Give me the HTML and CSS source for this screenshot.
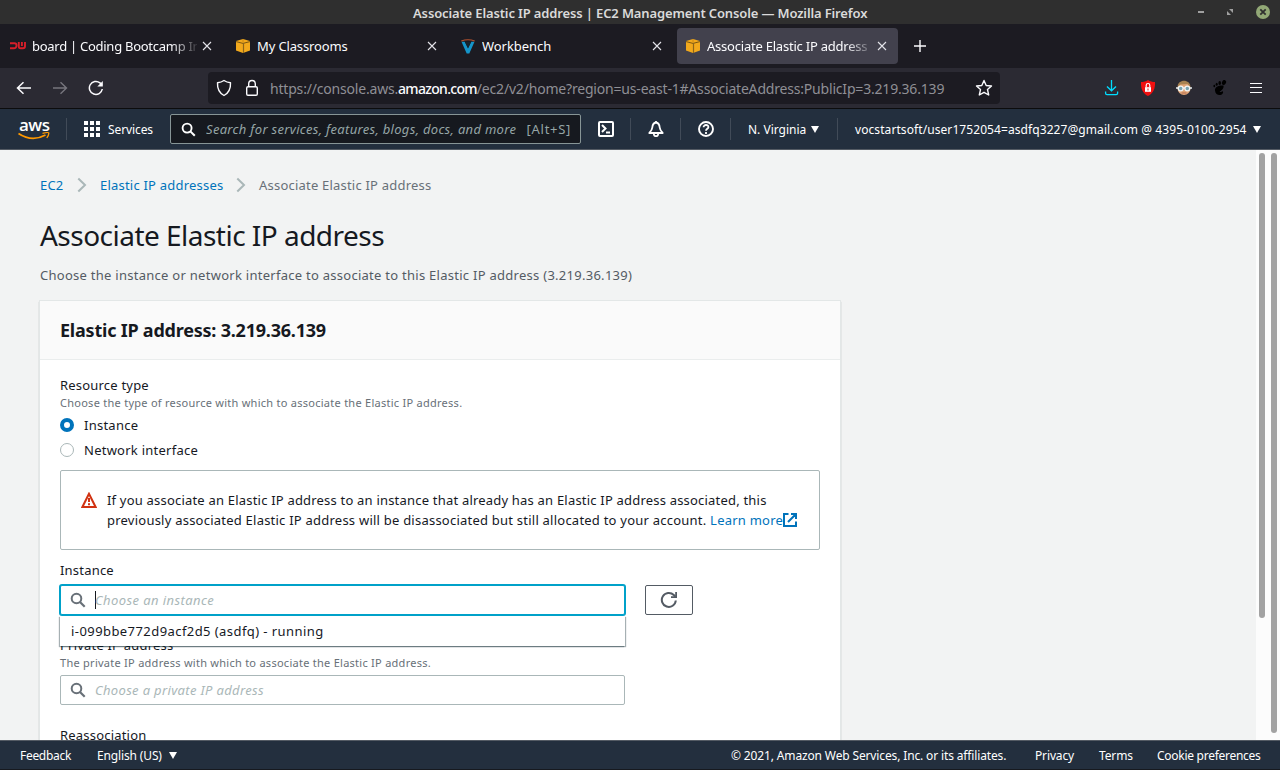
FILE: index.html
```html
<!DOCTYPE html>
<html lang="en">
<head>
<meta charset="utf-8">
<title>Associate Elastic IP address | EC2 Management Console</title>
<link rel="stylesheet" href="styles.css">
</head>
<body>
<svg class="defs" width="0" height="0">
  <symbol id="x" viewBox="0 0 10 10"><path d="M1 1l8 8M9 1l-8 8" stroke="#e4e4ea" stroke-width="1.1" fill="none"/></symbol>
  <symbol id="cube" viewBox="0 0 14 14"><path d="M0 2L7 0l7 2v9.5L7 14l-7-2.500z" fill="#f2a91c"/><path d="M0 2.600L7 4.400l7-1.800" stroke="#5d4310" stroke-width=".8" fill="none"/><path d="M7.500 4v10" stroke="#8d651a" stroke-width="1.200"/><path d="M7 .2v3" stroke="#b57a16" stroke-width=".6"/></symbol>
  <symbol id="search" viewBox="0 0 16 16"><circle cx="6.500" cy="6.500" r="4.800" stroke="currentColor" stroke-width="2" fill="none"/><path d="M10 10l4.700 4.700" stroke="currentColor" stroke-width="2.200"/></symbol>
  <symbol id="chev" viewBox="0 0 10 16"><path d="M1.300 1.500L8 8l-6.700 6.500" stroke="#aab7b8" stroke-width="2" fill="none"/></symbol>
  <symbol id="tri" viewBox="0 0 8 7"><path d="M0 0h8L4 7z" fill="#fff"/></symbol>
</svg>

<div class="titlebar">
  <span class="window-title">Associate Elastic IP address | EC2 Management Console — Mozilla Firefox</span>
  <div class="window-controls">
    <svg width="6" height="2"><path d="M0 0h6v2H0z" fill="#a0a0a0"/></svg>
    <svg width="6" height="6"><path d="M2 0h4v4zM0 2l4 4H0z" fill="#a0a0a0"/></svg>
    <svg width="14" height="14"><circle cx="7" cy="7" r="7" fill="#92a876"/><path d="M4.300 4.300l5.400 5.400M9.700 4.300L4.300 9.700" stroke="#2f2f2f" stroke-width="1.800"/></svg>
  </div>
</div>

<div class="tabs">
  <div class="tab">
    <svg class="fav" width="16" height="8" viewBox="0 0 16 8"><path d="M0 1.200h4.500a2 2 0 0 1 2 2v.6a2.500 2.500 0 0 1-2.500 2.500H0M8.800 0v4.500a1.800 1.800 0 0 0 1.800 1.800H13a2 2 0 0 0 2-2V0M11.900 0v4" stroke="#d81f2a" stroke-width="1.900" fill="none"/></svg>
    <span class="tab-text t-board">board | Coding Bootcamp In</span>
    <svg class="close" width="10" height="10"><use href="#x"/></svg>
  </div>
  <div class="tab">
    <svg class="fav" width="14" height="14"><use href="#cube"/></svg>
    <span class="tab-text t-class">My Classrooms</span>
    <svg class="close" width="10" height="10"><use href="#x"/></svg>
  </div>
  <div class="tab">
    <svg class="fav" width="14" height="15" viewBox="0 0 14 15"><path d="M.5 2.800h3.200L7 9.500l3.300-6.700h3.200L8.300 14.500H5.700z" fill="#1595c9"/><path d="M4 3h6L7 9z" fill="#17252e"/><path d="M.3 2Q7-.6 13.700 2" stroke="#b5532f" stroke-width="1.100" fill="none"/></svg>
    <span class="tab-text t-work">Workbench</span>
    <svg class="close" width="10" height="10"><use href="#x"/></svg>
  </div>
  <div class="tab active">
    <svg class="fav" width="14" height="14"><use href="#cube"/></svg>
    <span class="tab-text t-assoc">Associate Elastic IP address</span>
    <svg class="close" width="10" height="10"><use href="#x"/></svg>
  </div>
  <svg class="plus" width="12" height="12"><path d="M6 0v12M0 6h12" stroke="#fbfbfe" stroke-width="1.400"/></svg>
</div>

<div class="navbar">
  <div class="nav-buttons">
    <svg width="16" height="14" viewBox="0 0 16 14"><path d="M15 7H2M7.500 1.300L1.500 7l6 5.700" stroke="#fbfbfe" stroke-width="1.500" fill="none"/></svg>
    <svg width="16" height="14" viewBox="0 0 16 14"><path d="M1 7h13M8.500 1.300l6 5.700-6 5.700" stroke="#77767e" stroke-width="1.400" fill="none"/></svg>
    <svg width="16" height="16" viewBox="0 0 16 16"><path d="M14.300 9A6.500 6.500 0 1 1 12 2.900l2 2" stroke="#fbfbfe" stroke-width="1.500" fill="none"/><path d="M14.800 1v5.500H9.300z" fill="#fbfbfe"/></svg>
  </div>
  <div class="urlbar">
    <svg width="16" height="18" viewBox="0 0 16 18"><path d="M8 1.500c2 1.400 4 2 6.500 2.200C14.800 9.500 12.500 14 8 16.500 3.500 14 1.200 9.500 1.500 3.700 4 3.500 6 2.900 8 1.500z" stroke="#fbfbfe" stroke-width="1.400" fill="none" stroke-linejoin="round"/></svg>
    <svg class="lock" width="14" height="18" viewBox="0 0 14 18"><rect x="1.700" y="7.700" width="10.600" height="8.600" rx="1.300" stroke="#fbfbfe" stroke-width="1.400" fill="none"/><path d="M3.700 7.500V4.800a3.300 3.300 0 0 1 6.600 0v2.700" stroke="#fbfbfe" stroke-width="1.400" fill="none"/></svg>
    <span class="url">https://console.aws.<b>amazon.com</b>/ec2/v2/home?region=us-east-1#AssociateAddress:PublicIp=3.219.36.139</span>
    <svg class="star" width="18" height="18" viewBox="0 0 18 18"><path d="M9 1.500l2.200 5 5.300.5-4 3.600 1.200 5.400L9 13.300 4.300 16l1.200-5.400-4-3.600 5.300-.5z" stroke="#fbfbfe" stroke-width="1.400" fill="none" stroke-linejoin="round"/></svg>
  </div>
  <div class="extensions">
    <svg width="16" height="16" viewBox="0 0 16 16"><path d="M7.500 0v10.500M3 6.500l4.500 4.300L12 6.500M1.600 11.500v1.800q0 1.400 1.400 1.400h9.200q1.400 0 1.400-1.400v-1.800" stroke="#00ddff" stroke-width="1.300" fill="none"/></svg>
    <svg width="16" height="16" viewBox="0 0 16 16"><path d="M8 0c2 1.500 4.500 2 7 2 .4 6-1.500 11.500-7 14C2.500 13.500.6 8 1 2c2.500 0 5-.5 7-2z" fill="#f01010"/><path d="M5 7.200h6v4.600H5z" fill="#fff"/><path d="M6.200 7.500V5.300a1.800 1.800 0 0 1 3.600 0v2.200" stroke="#fff" stroke-width="1.200" fill="none"/><path d="M8 8.500v2" stroke="#d22"/></svg>
    <svg width="16" height="16" viewBox="0 0 16 16"><ellipse cx="8" cy="8.500" rx="6.500" ry="6.500" fill="#e0a577"/><path d="M1.500 7C1.600-1.500 14.400-1.500 14.500 7L11.500 4 4.500 4.500z" fill="#a78251"/><path d="M0 8h16" stroke="#e8eef0" stroke-width="1.500"/><circle cx="4.700" cy="8.500" r="2.400" fill="#78a3b0" stroke="#f2f4f4" stroke-width="1.300"/><circle cx="11.300" cy="8.500" r="2.400" fill="#78a3b0" stroke="#f2f4f4" stroke-width="1.300"/><path d="M5.500 13h5" stroke="#b66c51"/></svg>
    <svg width="16" height="16" viewBox="0 0 16 16"><path d="M11.500 5.500C7 5 2.500 7 3 10.500c.2 3.500 3 5 5.500 4.500 2-.5 3-2.300 2.500-3.500-.7-1-1.600.8-3 .5C6.300 11.500 12.500 10 11.500 5.500z"/><ellipse cx="12" cy="2.500" rx="2" ry="2.600" transform="rotate(25 12 2.500)"/><ellipse cx="7.700" cy="3" rx="1.300" ry="1.900"/><ellipse cx="4.700" cy="4.300" rx="1" ry="1.500"/><ellipse cx="2.300" cy="6" rx=".9" ry="1.300"/></svg>
    <svg width="16" height="16" viewBox="0 0 16 16"><path d="M2 3.500h12M2 7.500h12M2 12.500h12" stroke="#fbfbfe" stroke-width="1.200"/></svg>
  </div>
</div>

<header class="aws-header">
  <div class="aws-logo">
    <span>aws</span>
    <svg width="32" height="8" viewBox="0 0 32 8"><path d="M.5 1.500Q14 10.500 27.500 3" stroke="#ff9900" stroke-width="1.700" fill="none"/><path d="M24.500 1.300q6-1.300 6.300-.3.100 1.800-2 5" stroke="#ff9900" stroke-width="1.300" fill="none"/></svg>
  </div>
  <i class="rule r-logo"></i>
  <svg class="grid-icon" width="16" height="16"><path d="M0 0h4v4H0zM6 0h4v4H6zM12 0h4v4h-4zM0 6h4v4H0zM6 6h4v4H6zM12 6h4v4h-4zM0 12h4v4H0zM6 12h4v4H6zM12 12h4v4h-4z" fill="#fff"/></svg>
  <span class="services">Services</span>
  <div class="global-search">
    <svg width="15" height="15"><use href="#search"/></svg>
    <span class="gs-text">Search for services, features, blogs, docs, and more</span>
    <span class="gs-key">[Alt+S]</span>
  </div>
  <svg class="h-icon first" width="16" height="16" viewBox="0 0 16 16"><rect x="1" y="1" width="14" height="14" rx="1" stroke="#fff" stroke-width="2" fill="none"/><path d="M4 4l3.500 3.500L4 11M8 11.500h4" stroke="#fff" stroke-width="2" fill="none"/></svg>
  <i class="rule"></i>
  <svg class="h-icon" width="16" height="16" viewBox="0 0 16 16"><path d="M8 1.500C5 2 4.500 4 4.300 6.500 4 9 2.500 10.500 1.300 12h13.400C13.500 10.500 12 9 11.700 6.500 11.500 4 11 2 8 1.500z" stroke="#fff" stroke-width="1.800" fill="none" stroke-linejoin="round"/><path d="M8 0v2M5.800 12.500q0 2.700 2.200 2.700t2.200-2.700" stroke="#fff" stroke-width="1.700" fill="none"/></svg>
  <i class="rule"></i>
  <svg class="h-icon" width="16" height="16" viewBox="0 0 16 16"><circle cx="8" cy="8" r="7" stroke="#fff" stroke-width="1.900" fill="none"/><path d="M5.600 6.300C5.500 3.200 10.500 3.300 10.400 6.100 10.300 7.800 8 7.700 8 9.800M8 11v2" stroke="#fff" stroke-width="1.800" fill="none"/></svg>
  <i class="rule"></i>
  <span class="region">N. Virginia</span>
  <svg width="8" height="7"><use href="#tri"/></svg>
  <i class="rule r-account"></i>
  <span class="account">vocstartsoft/user1752054=asdfq3227@gmail.com @ 4395-0100-2954</span>
  <svg width="8" height="7"><use href="#tri"/></svg>
</header>

<div class="viewport">
  <main class="page">
    <nav class="crumbs">
      <a class="c-ec2">EC2</a>
      <svg width="10" height="16"><use href="#chev"/></svg>
      <a class="c-eip">Elastic IP addresses</a>
      <svg width="10" height="16"><use href="#chev"/></svg>
      <span class="c-cur">Associate Elastic IP address</span>
    </nav>
    <h1><span>Associate Elastic IP address</span></h1>
    <p class="intro">Choose the instance or network interface to associate to this Elastic IP address (3.219.36.139)</p>
    <section class="card">
      <div class="card-head"><h2>Elastic IP address: 3.219.36.139</h2></div>
      <div class="card-body">
        <div class="label l-res">Resource type</div>
        <div class="hint h-res">Choose the type of resource with which to associate the Elastic IP address.</div>
        <div class="radio"><i class="dot on"></i><span class="r-inst">Instance</span></div>
        <div class="radio"><i class="dot"></i><span class="r-net">Network interface</span></div>
        <div class="alert">
          <svg width="16" height="16" viewBox="0 0 16 16"><path d="M8 1.800L1.400 15h13.200z" stroke="#d13212" stroke-width="2" fill="none"/><path d="M8 6v4M8 11.300v1.900" stroke="#d13212" stroke-width="2"/></svg>
          <div class="alert-text">
            <div class="a1">If you associate an Elastic IP address to an instance that already has an Elastic IP address associated, this</div>
            <div class="a2-row"><span class="a2">previously associated Elastic IP address will be disassociated but still allocated to your account. <a>Learn more</a></span><svg width="14" height="14" viewBox="0 0 14 14"><path d="M5.500 1H1v12h12V8.500M8 1h5v5M13 1L5 9" stroke="#0073bb" stroke-width="2" fill="none"/></svg></div>
          </div>
        </div>
        <div class="label l-inst">Instance</div>
        <div class="instance-row">
          <div class="select-wrap">
            <div class="field focused">
              <svg width="16" height="16"><use href="#search"/></svg>
              <i class="caret"></i><span class="ph p-inst">Choose an instance</span>
            </div>
            <div class="dropdown"><span>i-099bbe772d9acf2d5 (asdfq) - running</span></div>
          </div>
          <div class="refresh"><svg width="18" height="18" viewBox="0 0 18 18"><path d="M15.800 9.500A7 7 0 1 1 13.800 4l1.700 1.700" stroke="#545b64" stroke-width="2" fill="none"/><path d="M17 1v6h-6V5.200h4.200V1z" fill="#545b64"/></svg></div>
        </div>
        <div class="label l-priv">Private IP address</div>
        <div class="hint h-priv">The private IP address with which to associate the Elastic IP address.</div>
        <div class="field">
          <svg width="16" height="16"><use href="#search"/></svg>
          <span class="ph p-priv">Choose a private IP address</span>
        </div>
        <div class="label l-reas">Reassociation</div>
      </div>
    </section>
  </main>
  <div class="scrollbars"><i class="thumb inner"></i><i class="thumb outer"></i></div>
</div>

<footer class="footer">
  <span class="f-feed">Feedback</span>
  <span class="f-lang">English (US)</span>
  <svg width="8" height="7"><use href="#tri"/></svg>
  <span class="f-copy">© 2021, Amazon Web Services, Inc. or its affiliates.</span>
  <span class="f-priv">Privacy</span>
  <span class="f-terms">Terms</span>
  <span class="f-cook">Cookie preferences</span>
</footer>
</body>
</html>
```
FILE: styles.css
```css
* { box-sizing: border-box; }
body { margin: 0; width: 1280px; height: 770px; overflow: hidden; display: flex; flex-direction: column; font-family: "Noto Sans", "Open Sans", sans-serif; font-size: 13px; color: #16191f; }
svg { display: block; flex: none; }
span, a, h1, h2, p, .label, .hint, .a1 { white-space: nowrap; }
.defs { position: absolute; }

.titlebar { height: 24px; flex: none; background: #2f2f2f; display: flex; align-items: center; justify-content: space-between; padding: 2px 10px 0 413px; color: #dadada; }
.window-title { font-weight: 600; font-size: 13px; line-height: 20px; letter-spacing: -.135px; }
.window-controls { display: flex; align-items: center; gap: 23px; margin-top: -3px; }

.tabs { height: 44px; flex: none; background: #1c1b22; display: flex; align-items: center; gap: 4px; padding-left: 2px; }
.tab { width: 221px; height: 36px; border-radius: 4px; display: flex; align-items: center; padding: 0 11px 0 9px; color: #fbfbfe; }
.tab.active { background: #42414d; }
.fav { margin-right: 7px; }
.tab:first-child { padding-left: 8px; }
.tab:first-child .fav { margin-right: 6px; }
.tab-text { flex: 1; overflow: hidden; font-size: 13px; line-height: 20px; margin-right: 5px; letter-spacing: -.14px; }
.t-board { letter-spacing: -.27px; }
.t-assoc { letter-spacing: -.22px; }
.t-work { letter-spacing: -.06px; }
.t-board, .t-assoc { -webkit-mask-image: linear-gradient(90deg, #000 84%, transparent 102%); mask-image: linear-gradient(90deg, #000 84%, transparent 102%); }
.plus { margin-left: 12px; }

.navbar { height: 40px; flex: none; background: #2b2a33; display: flex; align-items: center; }
.nav-buttons { width: 208px; display: flex; align-items: center; gap: 20px; padding-left: 16px; }
.urlbar { width: 792px; height: 32px; background: #1c1b22; border-radius: 4px; display: flex; align-items: center; padding: 0 7px 0 8px; }
.lock { margin-left: 13px; }
.url { margin-left: 11px; font-size: 14px; color: #8f8f95; flex: 1; letter-spacing: -.19px; }
.url b { font-weight: 500; color: #fbfbfe; letter-spacing: -.7px; }
.extensions { display: flex; gap: 20px; margin-left: 104px; }

.aws-header { height: 42px; flex: none; background: #232f3e; border-top: 1px solid #0c0c0d; border-bottom: 1px solid #545b64; display: flex; align-items: center; color: #fff; font-size: 12px; }
.aws-logo { width: 32px; margin-left: 18px; height: 22px; display: flex; flex-direction: column; }
.aws-logo span { font: 600 17px/13px "Open Sans", sans-serif; height: 14px; letter-spacing: -.5px; padding-left: 1px; }
.rule { width: 1px; height: 22px; background: #414b58; margin: 0 17px 0 16px; flex: none; }
.services { width: 62px; margin-left: 8px; letter-spacing: -.1px; }
.global-search { width: 411px; height: 30px; background: #16191f; border: 1px solid #879596; border-radius: 2px; display: flex; align-items: center; padding: 0 9px 0 10px; }
.gs-text { width: 312px; margin-left: 10px; font-style: italic; color: #95a5a6; overflow: hidden; font-size: 13px; letter-spacing: .31px; }
.gs-key { margin-left: 9px; color: #95a5a6; font-size: 13px; letter-spacing: .7px; }
.h-icon.first { margin-left: 17px; }
.region { width: 63px; }
.rule.r-account { margin: 0 17px 0 18px; }
.account { width: 398px; letter-spacing: .08px; }

.viewport { height: 590px; flex: none; display: flex; overflow: hidden; }
.page { width: 1256px; background: #f2f3f3; padding: 25px 40px 0; }
.crumbs { display: flex; align-items: center; height: 20px; letter-spacing: .21px; }
.crumbs a, .a2 a { color: #0073bb; }
.c-ec2 { width: 37px; }
.c-eip { width: 123px; margin: 0 13px; }
.c-cur { color: #687078; margin-left: 13px; }
.crumbs .c-eip + svg { margin-left: 0; }
h1 { margin: 22px 0 0; font-size: 28px; font-weight: 400; line-height: 36px; letter-spacing: -.52px; }
.intro { margin: 12px 0 0; line-height: 20px; color: #545b64; letter-spacing: .27px; }
.card { width: 800px; margin-top: 16px; background: #fff; box-shadow: 0 0 0 1px #e3e7e7, 1px 1px 1px 0 rgba(0,28,36,.3), -1px 1px 1px 0 rgba(0,28,36,.3); }
.card-head { height: 59px; background: #fafafa; border-bottom: 1px solid #eaeded; padding: 0 20px; display: flex; align-items: center; }
h2 { margin: 0; font-size: 18px; line-height: 24px; font-weight: 700; letter-spacing: -.22px; }
.card-body { padding: 15px 20px 0; height: 450px; }
.label { height: 20px; line-height: 20px; letter-spacing: .2px; }
.hint { height: 16px; line-height: 16px; font-size: 11px; color: #687078; letter-spacing: .265px; }
.radio { display: flex; align-items: center; height: 20px; margin-top: 5px; gap: 10px; letter-spacing: .25px; }
.hint + .radio { margin-top: 4px; }
.dot { width: 14px; height: 14px; border-radius: 50%; border: 1px solid #aab7b8; }
.dot.on { border: 4px solid #0073bb; }
.alert { height: 80px; border: 1px solid #aab7b8; border-radius: 2px; margin-top: 10px; padding: 19px 20px; display: flex; line-height: 20px; letter-spacing: .2px; }
.alert > svg { margin-top: 2px; }
.alert-text { margin-left: 10px; }
.a2-row { display: flex; align-items: center; letter-spacing: .23px; }
.l-inst { margin-top: 10px; }
.instance-row { display: flex; gap: 20px; margin-top: 5px; height: 30px; }
.select-wrap { position: relative; width: 565px; }
.field { width: 565px; height: 30px; border: 1px solid #aab7b8; border-radius: 2px; background: #fff; display: flex; align-items: center; padding-left: 9px; color: #687078; }
.hint + .field { margin-top: 4px; }
.field.focused { border-color: #00a1c9; box-shadow: 0 0 0 1px #00a1c9; }
.caret { width: 1px; height: 18px; background: #16191f; margin-left: 9px; margin-right: -1px; }
.ph { font-style: italic; color: #aab7b8; letter-spacing: .42px; }
.p-priv { margin-left: 9px; letter-spacing: .34px; }
.dropdown { position: absolute; left: 0; top: 31px; width: 565px; height: 30px; background: #fff; box-shadow: 1px 1px 1px rgba(0,28,36,.35), -1px 1px 1px rgba(0,28,36,.35); padding-left: 11px; line-height: 30px; letter-spacing: .43px; }
.refresh { width: 48px; height: 30px; border: 1px solid #545b64; border-radius: 2px; display: flex; align-items: center; justify-content: center; }
.l-priv { margin-top: 20px; }
.l-reas { margin-top: 20px; }

.scrollbars { width: 24px; background: #fcfcfc; display: flex; gap: 6px; padding: 3px 0 0 3px; }
.thumb { width: 6px; border-radius: 3px; background: #a2a2a2; }
.inner { height: 465px; }
.outer { height: 580px; }

.footer { height: 30px; flex: none; background: #232f3e; border-top: 1px solid #545b64; border-bottom: 1px solid #16191f; display: flex; align-items: center; padding-left: 20px; font-size: 12px; color: #fff; letter-spacing: -.14px; }
.f-feed { width: 77px; letter-spacing: -.3px; }
.f-lang { width: 72px; }
.f-copy { width: 304px; margin-left: 554px; }
.f-priv { width: 64px; }
.f-terms { width: 58px; }
.f-cook { letter-spacing: -.27px; }
```
